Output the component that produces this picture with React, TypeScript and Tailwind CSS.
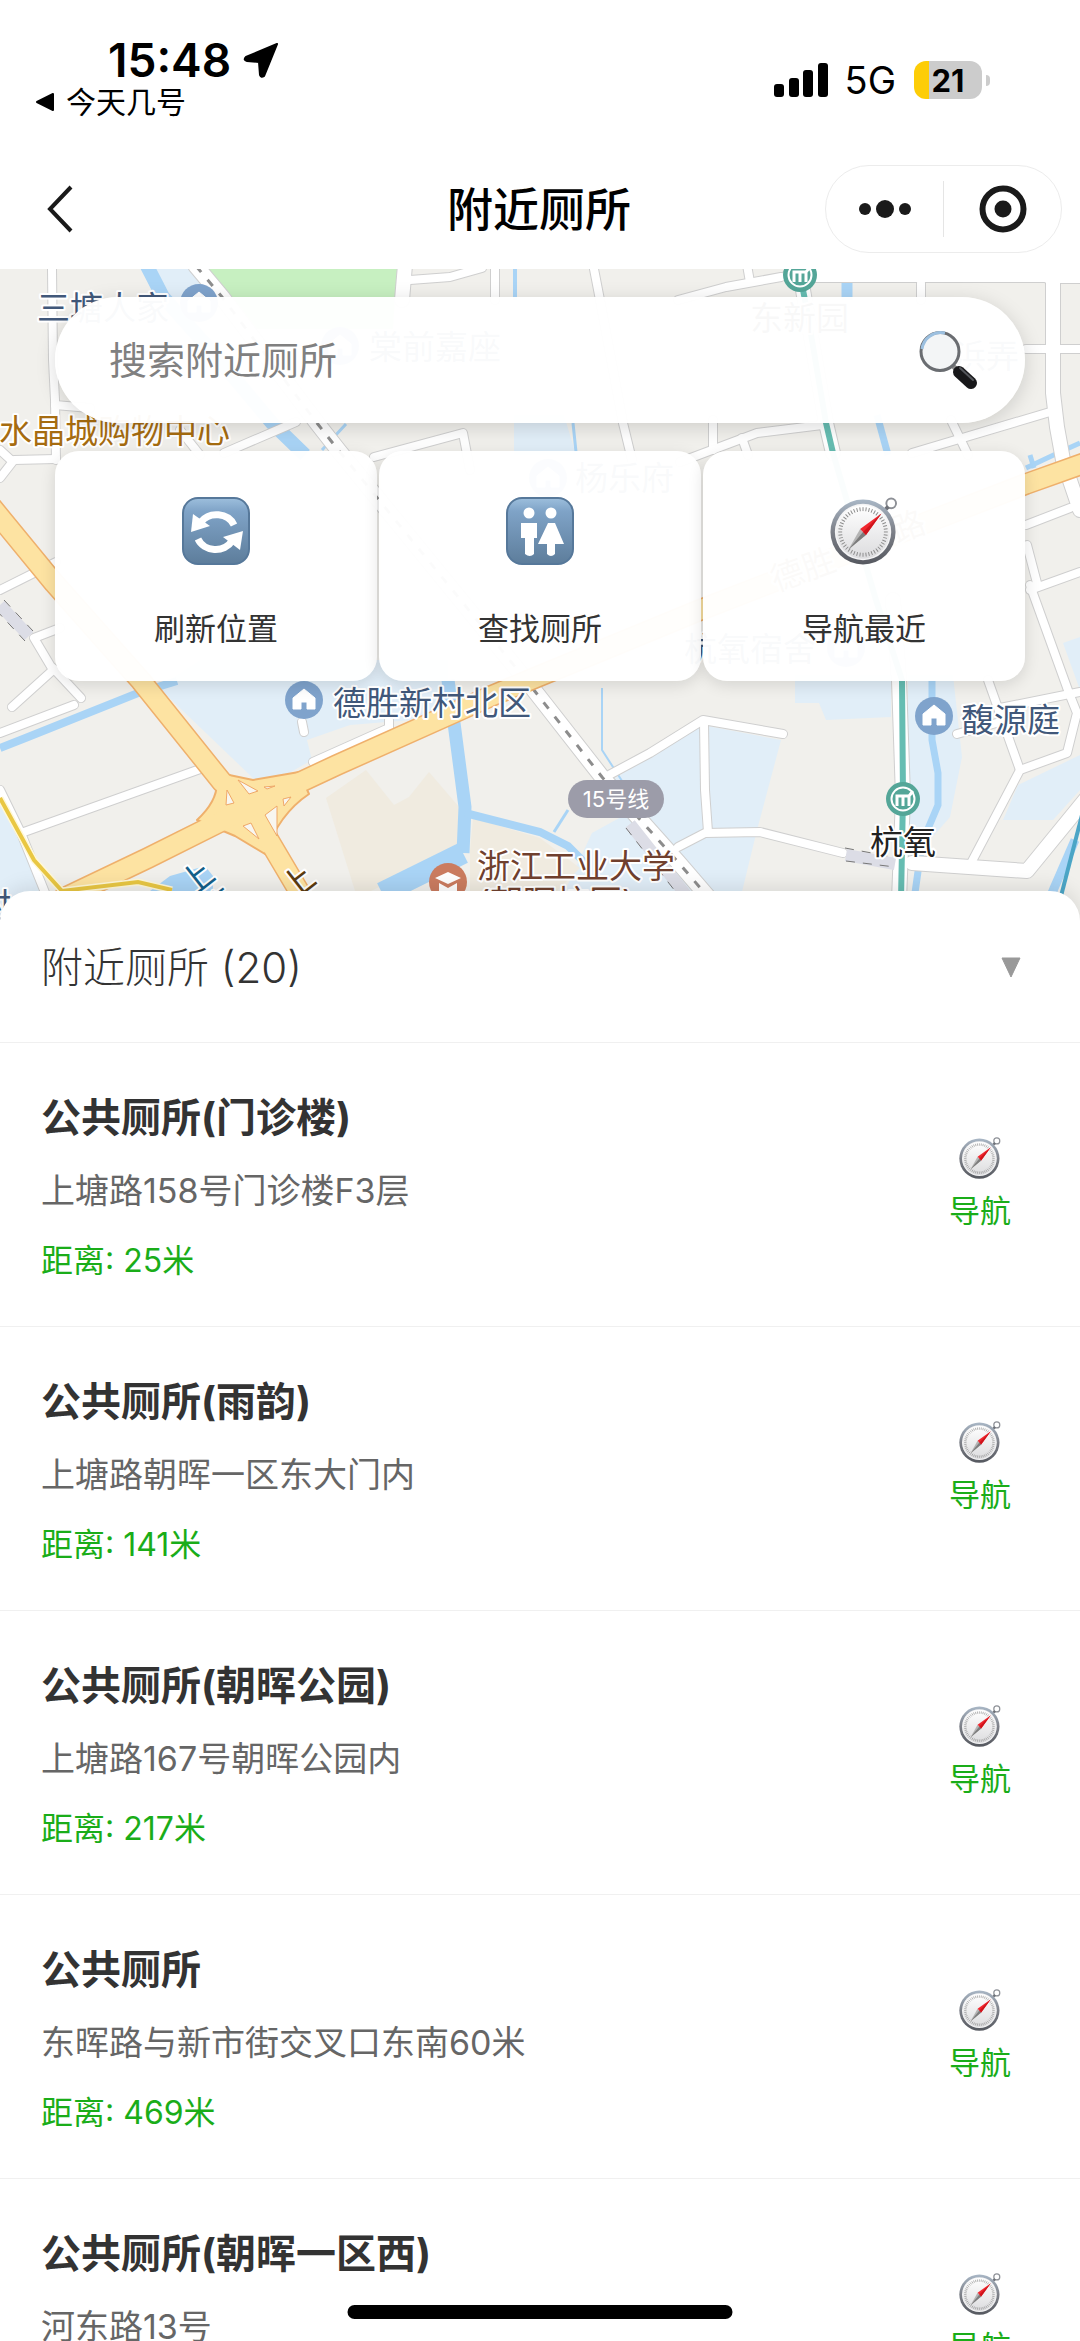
import { useState } from 'react';

interface Toilet {
  id: number;
  name: string;
  address: string;
  distance?: number;
}

const toilets: Toilet[] = [
  { id: 1, name: '公共厕所(门诊楼)', address: '上塘路158号门诊楼F3层', distance: 25 },
  { id: 2, name: '公共厕所(雨韵)', address: '上塘路朝晖一区东大门内', distance: 141 },
  { id: 3, name: '公共厕所(朝晖公园)', address: '上塘路167号朝晖公园内', distance: 217 },
  { id: 4, name: '公共厕所', address: '东晖路与新市街交叉口东南60米', distance: 469 },
  { id: 5, name: '公共厕所(朝晖一区西)', address: '河东路13号' },
];

const TOTAL = 20;

function CompassIcon({ className }: { className: string }) {
  const ticks = Array.from({ length: 48 }, (_, i) => i * 7.5);
  return (
    <svg viewBox="0 0 70 70" className={className} aria-hidden="true">
      <defs>
        <linearGradient id="compassRim" x1="0" y1="0" x2="0" y2="1">
          <stop offset="0" stopColor="#a9b7c6" />
          <stop offset="0.5" stopColor="#7d8088" />
          <stop offset="1" stopColor="#55585f" />
        </linearGradient>
        <linearGradient id="compassFace" x1="0" y1="0" x2="0" y2="1">
          <stop offset="0" stopColor="#ffffff" />
          <stop offset="1" stopColor="#dcdcde" />
        </linearGradient>
      </defs>
      <circle cx="63" cy="6.500" r="5" fill="none" stroke="#8d9096" strokeWidth="2" />
      <path d="M56 14l4-4" stroke="#6d7077" strokeWidth="4" />
      <circle cx="34" cy="36" r="33.500" fill="url(#compassRim)" />
      <circle cx="34" cy="36" r="29" fill="#f4f4f5" />
      <circle cx="34" cy="36" r="27.500" fill="url(#compassFace)" />
      {ticks.map((deg) => (
        <path key={deg} d="M34 10.500v4" stroke="#8b8b8b" strokeWidth="1" transform={`rotate(${deg} 34 36)`} />
      ))}
      <path d="M31 33l6 6-18 15z" fill="#b4b4b4" />
      <path d="M19 54l15-18 3 3z" fill="#7c7c7c" />
      <path d="M31 33L53 17 37 39z" fill="#f0262e" />
      <path d="M34 36L53 17 37 39z" fill="#cf141c" />
    </svg>
  );
}

function EmojiTile({ children }: { children: React.ReactNode }) {
  return (
    <svg viewBox="0 0 68 68" className="size-[68px]" aria-hidden="true">
      <defs>
        <linearGradient id="tileFill" x1="0" y1="0" x2="0" y2="1">
          <stop offset="0" stopColor="#9dbfdd" />
          <stop offset="0.2" stopColor="#7fa3c7" />
          <stop offset="1" stopColor="#5d7d9b" />
        </linearGradient>
      </defs>
      <rect x="1" y="1" width="66" height="66" rx="15" fill="url(#tileFill)" stroke="#56789a" strokeWidth="2" />
      {children}
    </svg>
  );
}

function RefreshIcon() {
  return (
    <EmojiTile>
      <path d="M52 28A19 17 0 0 0 19 25" fill="none" stroke="#fff" strokeWidth="7" />
      <path d="M11 17l-2 18 19-6z" fill="#fff" />
      <path d="M16 42A19 17 0 0 0 50 44" fill="none" stroke="#fff" strokeWidth="7" />
      <path d="M61 34l-20 6 17 13z" fill="#fff" />
    </EmojiTile>
  );
}

function RestroomIcon() {
  return (
    <EmojiTile>
      <circle cx="23" cy="16" r="5.500" fill="#fff" />
      <path d="M15 26h16v15h-3v16q-4 4-9 0V41h-4z" fill="#fff" />
      <circle cx="45" cy="16" r="5.500" fill="#fff" />
      <path d="M42 26h7l9 21h-9v10q-4 4-8 0V47h-9z" fill="#fff" />
    </EmojiTile>
  );
}

function SearchIcon() {
  return (
    <svg viewBox="0 0 60 60" className="size-[60px]" aria-hidden="true">
      <path d="M34 36l6 6" stroke="#8b8b8b" strokeWidth="5" />
      <circle cx="21" cy="21.500" r="19" fill="#f3f5f6" stroke="#6a6d71" strokeWidth="3" />
      <path d="M3 19A19 19 0 0 1 26 3" fill="none" stroke="#9cc0e0" strokeWidth="3" />
      <path d="M40 42l12 11" stroke="#18181a" strokeWidth="12" strokeLinecap="round" />
      <path d="M41 38l13 12" stroke="#55575c" strokeWidth="2" strokeLinecap="round" />
    </svg>
  );
}

function HouseMarker({ x, y }: { x: number; y: number }) {
  return (
    <g transform={`translate(${x} ${y})`}>
      <circle r="19" fill="#7fa3cc" />
      <path d="M0-11L-11-2v11h8V2h6v7h8V-2z" fill="#fff" stroke="#fff" strokeLinejoin="round" />
    </g>
  );
}

function MetroMarker({ x, y }: { x: number; y: number }) {
  return (
    <g transform={`translate(${x} ${y})`}>
      <circle r="17" fill="#54a698" />
      <circle r="11.500" fill="none" stroke="#fff" strokeWidth="2" />
      <path d="M-6 7V-3H6V7M0-3V7M6-3L10-8" fill="none" stroke="#fff" strokeWidth="3" />
    </g>
  );
}

const roads = [
  'M52 269L53 360 55 400 56 460',
  'M55 405L90 408',
  'M0 478L14 460 56 459M0 450L12 461',
  'M224 453L296 422',
  'M180 430L200 455',
  'M374 457L463 433 470 470',
  'M410 280L450 277 482 268M495 265V300',
  'M594 269L600 300 623 423 632 460',
  'M747 265L750 282',
  'M678 300L726 287 781 277',
  'M713 420V450',
  'M680 462L757 433 822 425',
  'M742 438L748 455',
  'M921 283V300',
  'M912 453L1050 412M951 420L968 455',
  'M1026 349H1080',
  'M1026 525L1070 508M1027 545L1037 583M1030 590L1080 572',
  'M1030 585L1069 693 1077 713 1067 753 1020 770 970 865',
  'M988 680L1020 770',
  'M957 734L1000 722M1000 708L1080 692',
  'M609 775L650 753 703 720 783 734',
  'M704 722L705 790 708 832',
  'M678 847L705 833 760 832 843 853',
  'M0 733L74 705',
  'M12 707L53 670 34 638 60 628',
  'M53 668L81 698',
  'M24 832L203 768',
  'M0 790L21 833 46 895',
  'M0 590L56 562',
  'M302 722L304 732',
  'M313 762L389 728V720',
];

const wideRoads = [
  'M405 265L402 300',
  'M790 275H1048',
  'M1053 269V393L1057 427 1063 460 1080 510',
  'M1048 276H1080',
  'M803 290L826 423 833 453',
  'M893 600L899 680 903 797 899 900',
  'M912 863L1027 871 1085 800',
];

const rail = 'M196 266L222 297 317 423 339 451 530 685 602 777 678 862 715 905';

const highways = [
  'M-10 505L54 583 141 681 222 782 245 800 300 893',
  'M60 900L148 858 220 822 290 787 337 765 489 697 525 682 700 610 1026 484 1085 463',
];

const rivers = [
  { d: 'M147 266L163 297 215 355 272 423 305 455', w: 14 },
  { d: 'M847 269V300', w: 11 },
  { d: 'M877 415L888 455', w: 7 },
  { d: 'M932 680V740L938 773V805L922 843 914 900', w: 7 },
  { d: 'M448 680L454 723 465 807 463 853', w: 13 },
  { d: 'M465 813L540 832 568 846 584 862', w: 8 },
  { d: 'M463 853L382 893', w: 22 },
  { d: 'M0 748L28 737 138 693 177 681', w: 8 },
  { d: 'M568 810L554 832', w: 3 },
  { d: 'M602 688V750L624 784', w: 2 },
  { d: 'M515 269V300', w: 4 },
  { d: 'M573 423L576 452M346 424L322 450', w: 3 },
  { d: 'M1026 468L1060 452 1080 443M1030 455L1034 468', w: 5 },
  { d: 'M1075 840L1052 893', w: 9 },
];

// x, baseline, text
const placeLabels = [
  { x: 37, y: 320, text: '三塘人家' },
  { x: 369, y: 359, text: '棠前嘉座' },
  { x: 953, y: 368, text: '浜弄' },
  { x: 575, y: 490, text: '杨乐府' },
  { x: 684, y: 661, text: '杭氧宿舍' },
  { x: 333, y: 715, text: '德胜新村北区' },
  { x: 961, y: 732, text: '馥源庭' },
  { x: -22, y: 917, text: '村' },
];

function MapCanvas() {
  return (
    <svg
      viewBox="0 269 1080 660"
      preserveAspectRatio="xMidYMin slice"
      className="absolute inset-0 size-full"
      role="img"
      aria-label="地图"
    >
      <rect y="269" width="1080" height="660" fill="#f1f0ec" />

      <g fill="#e1eef8">
        <path d="M155 269h35l25 30h-42z" />
        <path d="M514 415h50l12 40h-62z" />
        <path d="M860 269h184v5H860z" />
        <path d="M158 687L200 660H448v57l-98 8-43 15 5 20-30 17-27 3z" />
        <path d="M795 675h96v42l-65 3-7-17h-24z" />
        <path d="M908 675h45l9 82-12 60-35 40h-7z" />
        <path d="M612 780L702 725l79 15-24 90-17 70h-50l-30-40z" />
        <path d="M592 833l40-22 68 90H560z" />
        <path d="M1018 785l62-30v35l-27 30h-50zM1063 643l17-6v53z" />
        <path d="M0 800l20 40 24 60-44 40z" />
      </g>
      <path d="M208 269H397l-4 60H250z" fill="#c7f0c1" />
      <g fill="#f0ebe0">
        <path d="M326 798l40-28 28 35 15-8 20-25 30 35 2 45-40 15-50 24h-16z" />
        <path d="M470 850l3-32 67 20 40 30-30 30h-80z" />
      </g>
      <path d="M150 891l20-15 35-10 8 10v20z" fill="#a9d4f6" />

      <g fill="none" stroke="#a9d4f6">
        {rivers.map((r) => (
          <path key={r.d} d={r.d} strokeWidth={r.w} />
        ))}
      </g>

      <g fill="none" strokeLinecap="round" strokeLinejoin="round">
        {roads.map((d) => (
          <path key={d} d={d} stroke="#cfcfcf" strokeWidth="10" />
        ))}
        {wideRoads.map((d) => (
          <path key={d} d={d} stroke="#cfcfcf" strokeWidth="16" />
        ))}
        <path d={rail} stroke="#cfcfcf" strokeWidth="17" />
        {roads.map((d) => (
          <path key={d} d={d} stroke="#fff" strokeWidth="8" />
        ))}
        {wideRoads.map((d) => (
          <path key={d} d={d} stroke="#fff" strokeWidth="14" />
        ))}
        <path d={rail} stroke="#fff" strokeWidth="15" />
      </g>
      <path d={rail} fill="none" stroke="#8d8d8d" strokeWidth="3" strokeDasharray="8 10" />
      <path d="M0 605L29 636M630 824L690 900M846 855L895 864" stroke="#dcdde6" strokeWidth="12" />
      <path
        d="M-4 610L25 641M4 600L33 631M626 828L682 900M845 848L893 857M846 861L895 867"
        stroke="#777"
        strokeWidth="1"
        strokeDasharray="9 8"
      />

      <g fill="none" strokeLinejoin="round">
        {highways.map((d) => (
          <path key={d} d={d} stroke="#efb06c" strokeWidth="22" />
        ))}
        <path d="M215 772q8 24-18 48l38 16 30 18q14-40 44-60l-10-22-46 8z" fill="#fde3a2" stroke="#efb06c" strokeWidth="2" />
        {highways.map((d) => (
          <path key={d} d={d} stroke="#fde3a2" strokeWidth="19" />
        ))}
      </g>
      <g fill="#f8f6f0" stroke="#efa868" strokeWidth="1">
        <path d="M238 780l20 11-9 3z" />
        <path d="M227 790l7 13-8 2z" />
        <path d="M277 806v30l-12-21z" />
        <path d="M243 826l8-3 8 16z" />
        <path d="M264 787l11-1-8 3zM283 799l8-2-7 9z" />
      </g>

      <path d="M0 798L34 860 62 891 138 882 172 890" fill="none" stroke="#fff8d8" strokeWidth="7" />
      <path d="M0 798L34 860 62 891 138 882 172 890" fill="none" stroke="#e9c743" strokeWidth="4" />
      <path d="M800 275L806 305 826 423 833 453 876 600 902 680 903 797 901 900" fill="none" stroke="#66bdb2" strokeWidth="6" />
      <path d="M1082 815L1060 900" fill="none" stroke="#4ba5c6" strokeWidth="4" />

      <HouseMarker x={199} y={303} />
      <HouseMarker x={340} y={346} />
      <HouseMarker x={548} y={478} />
      <HouseMarker x={846} y={648} />
      <HouseMarker x={304} y={700} />
      <HouseMarker x={934} y={716} />
      <MetroMarker x={800} y={275} />
      <MetroMarker x={903} y={799} />
      <g transform="translate(448 882)">
        <circle r="19" fill="#cb7c60" />
        <path d="M0-10L-13-4 0 2 13-4zM-9 1v9h18V1L0 6z" fill="#fff" />
      </g>

      <g fontSize="33" stroke="#fff" strokeWidth="4" strokeLinejoin="round" paintOrder="stroke">
        {placeLabels.map((l) => (
          <text key={l.text} x={l.x} y={l.y} fill="#41587a">
            {l.text}
          </text>
        ))}
        <text x="-1" y="443" fill="#a66c10">水晶城购物中心</text>
        <text x="750" y="330" fill="#333">东新园</text>
        <text x="870" y="854" fill="#222">杭氧</text>
        <text x="477" y="878" fill="#70402e">浙江工业大学</text>
        <text x="478" y="914" fill="#70402e">(朝晖校区)</text>
        <text transform="translate(776 592) rotate(-20)" fill="#8a6a3a">德胜</text>
        <text transform="translate(897 543) rotate(-20)" fill="#8a6a3a">路</text>
        <text transform="translate(191 898) rotate(-38)" fill="#14608a">上</text>
        <text transform="translate(213 926) rotate(-38)" fill="#14608a">塘</text>
        <text transform="translate(292 902) rotate(-38)" fill="#5c3c10">上</text>
      </g>
      <rect x="568" y="780" width="96" height="38" rx="19" fill="#9c9ca9" />
      <text x="616" y="807" fontSize="22" fill="#fff" textAnchor="middle">15号线</text>
    </svg>
  );
}

function StatusBar() {
  return (
    <div className="flex h-[149px] items-start justify-between pl-[35px] pr-[90px] pt-[34px]">
      <div>
        <div className="flex items-center gap-3 pl-[73px]">
          <span className="text-[46px] leading-[52px] font-semibold">15:48</span>
          <svg viewBox="0 0 36 36" className="size-9" aria-hidden="true">
            <path d="M34 2L3 15q-3 3 1 4l12 1 1 13q1 3 4 1z" stroke="#000" strokeWidth="2" strokeLinejoin="round" />
          </svg>
        </div>
        <a href="#back" className="flex items-center gap-[11px] text-[30px] leading-8">
          <svg viewBox="0 0 20 20" className="size-5" aria-hidden="true">
            <path d="M18 2v16L2 10z" stroke="#000" strokeWidth="2" strokeLinejoin="round" />
          </svg>
          今天几号
        </a>
      </div>
      <div className="flex items-center pt-[21px]">
        <svg viewBox="0 0 54 34" className="h-[34px] w-[54px]" aria-hidden="true">
          <rect x="0" y="21" width="10" height="13" rx="3" />
          <rect x="15" y="15" width="10" height="19" rx="3" />
          <rect x="29" y="7" width="10" height="27" rx="3" />
          <rect x="44" y="0" width="10" height="34" rx="3" />
        </svg>
        <span className="ml-[17px] text-[38px] leading-[50px]">5G</span>
        <div className="ml-[18px] flex h-[38px] w-[68px] items-center justify-center rounded-xl bg-linear-to-r from-[#fdcd07] from-22% to-[#cccccc] to-22% text-[31px] leading-none font-bold">
          21
        </div>
        <div className="ml-1 h-[11px] w-1 rounded-r-full bg-[#cccccc]" />
      </div>
    </div>
  );
}

function NavBar() {
  return (
    <div className="grid h-[120px] grid-cols-3 items-center pr-[18px]">
      <button type="button" aria-label="返回" className="ml-[46px] w-7">
        <svg viewBox="0 0 28 48" className="h-12 w-7" aria-hidden="true">
          <path d="M25 2L4 24l21 22" fill="none" stroke="#1a1a1a" strokeWidth="4" />
        </svg>
      </button>
      <h1 className="pl-4 text-center text-[46px] leading-[60px] font-medium">附近厕所</h1>
      <div className="flex h-[88px] w-[237px] items-center justify-self-end rounded-full border border-[#ececec]">
        <button type="button" aria-label="更多" className="flex flex-1 justify-center">
          <svg viewBox="0 0 52 20" className="h-5 w-[52px]" aria-hidden="true">
            <circle cx="6" cy="10" r="6" fill="#1a1a1a" />
            <circle cx="26" cy="10" r="9" fill="#1a1a1a" />
            <circle cx="46" cy="10" r="6" fill="#1a1a1a" />
          </svg>
        </button>
        <div className="h-14 w-px bg-[#e5e5e5]" />
        <button type="button" aria-label="关闭" className="flex flex-1 justify-center">
          <svg viewBox="0 0 48 48" className="size-12" aria-hidden="true">
            <circle cx="24" cy="24" r="20.500" fill="none" stroke="#1a1a1a" strokeWidth="6" />
            <circle cx="24" cy="24" r="8.500" fill="#1a1a1a" />
          </svg>
        </button>
      </div>
    </div>
  );
}

function ActionCard({ label, children }: { label: string; children: React.ReactNode }) {
  return (
    <button
      type="button"
      className="flex flex-1 flex-col items-center gap-10 rounded-3xl bg-white/97 pt-[46px] pb-[29px] text-[31px] leading-[47px] text-[#333333] shadow-[0_4px_16px_rgba(0,0,0,0.12)]"
    >
      {children}
      {label}
    </button>
  );
}

function ToiletRow({ toilet }: { toilet: Toilet }) {
  return (
    <li className="flex min-h-[284px] items-start justify-between border-b border-[#f0f0f0] pr-[41px] pl-[41px] pt-12">
      <div>
        <h3 className="text-[40px] leading-[54px] font-bold text-[#333333]">{toilet.name}</h3>
        <p className="mt-[22px] text-[34px] leading-[48px] text-[#666666]">{toilet.address}</p>
        {toilet.distance !== undefined && (
          <p className="mt-6 text-[32px] leading-[44px] text-[#1aad19]">距离: {toilet.distance}米</p>
        )}
      </div>
      <button
        type="button"
        className="mt-[46px] flex flex-col items-center gap-3 px-7 text-[31px] leading-[40px] text-[#1aad19]"
      >
        <CompassIcon className="size-[42px]" />
        导航
      </button>
    </li>
  );
}

export default function App() {
  const [keyword, setKeyword] = useState('');
  const [expanded, setExpanded] = useState(true);

  return (
    <div className="flex h-screen flex-col overflow-hidden bg-white font-['Inter','Noto_Sans_CJK_SC',sans-serif] text-black">
      <header className="shrink-0">
        <StatusBar />
        <NavBar />
      </header>

      <section className="relative h-[660px] shrink-0 overflow-hidden">
        <MapCanvas />
        <div className="relative flex flex-col gap-7 px-[55px] pt-7">
          <form
            className="flex h-[126px] items-center justify-between rounded-full bg-white/97 pr-[46px] pl-[54px] shadow-[0_4px_20px_rgba(0,0,0,0.15)]"
            onSubmit={(e) => e.preventDefault()}
          >
            <input
              type="text"
              aria-label="搜索附近厕所"
              placeholder="搜索附近厕所"
              value={keyword}
              onChange={(e) => setKeyword(e.target.value)}
              className="min-w-0 flex-1 bg-transparent text-[38px] leading-[56px] outline-none placeholder:text-[#808080]"
            />
            <button type="submit" aria-label="搜索">
              <SearchIcon />
            </button>
          </form>
          <div className="flex gap-0.5">
            <ActionCard label="刷新位置">
              <RefreshIcon />
            </ActionCard>
            <ActionCard label="查找厕所">
              <RestroomIcon />
            </ActionCard>
            <ActionCard label="导航最近">
              <CompassIcon className="size-[68px]" />
            </ActionCard>
          </div>
        </div>
      </section>

      <main className="relative -mt-[38px] flex min-h-0 flex-1 flex-col rounded-t-[30px] bg-white shadow-[0_-4px_20px_rgba(0,0,0,0.1)]">
        <button
          type="button"
          aria-expanded={expanded}
          onClick={() => setExpanded(!expanded)}
          className="flex h-[152px] shrink-0 items-center justify-between border-b border-[#f0f0f0] pt-0.5 pr-[58px] pl-[41px]"
        >
          <span className="text-[42px] leading-[60px] font-light text-[#333333]">附近厕所 ({TOTAL})</span>
          <svg viewBox="0 0 22 22" className="size-[22px]" aria-hidden="true">
            <path d="M2 1h18l-9 19z" fill="#999" stroke="#999" strokeLinejoin="round" />
          </svg>
        </button>
        {expanded && (
          <ul className="min-h-0 flex-1 overflow-y-auto [scrollbar-width:none]">
            {toilets.map((t) => (
              <ToiletRow key={t.id} toilet={t} />
            ))}
          </ul>
        )}
      </main>

      <div className="fixed bottom-[22px] left-1/2 h-3.5 w-[385px] -translate-x-1/2 rounded-full bg-black" />
    </div>
  );
}
